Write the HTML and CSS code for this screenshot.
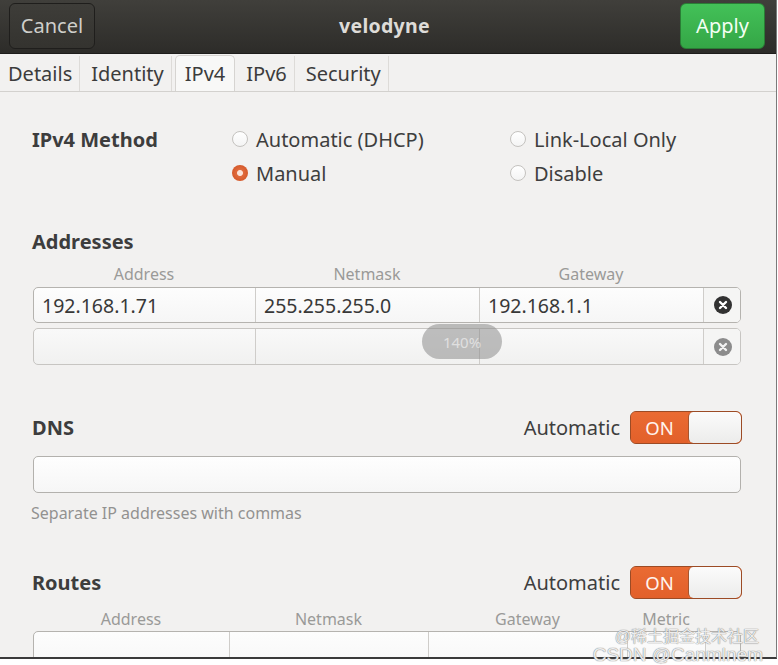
FILE: index.html
```html
<!DOCTYPE html>
<html>
<head>
<meta charset="utf-8">
<link rel="stylesheet" href="styles.css">
</head>
<body>
<div class="window">
  <header class="headerbar">
    <button class="btn btn-cancel">Cancel</button>
    <div class="title">velodyne</div>
    <button class="btn btn-apply">Apply</button>
  </header>
  <nav class="tabs">
    <div class="tab">Details</div>
    <div class="tab">Identity</div>
    <div class="tab active">IPv4</div>
    <div class="tab">IPv6</div>
    <div class="tab">Security</div>
  </nav>
  <main class="content">
    <section class="method">
      <div class="section-title method-label">IPv4 Method</div>
      <label class="radio"><span class="dot"></span>Automatic (DHCP)</label>
      <label class="radio"><span class="dot"></span>Link-Local Only</label>
      <label class="radio"><span class="dot checked"></span>Manual</label>
      <label class="radio"><span class="dot"></span>Disable</label>
    </section>

    <div class="section-title addresses-title">Addresses</div>
    <div class="col-labels addr-cols">
      <span>Address</span><span>Netmask</span><span>Gateway</span><span></span>
    </div>
    <div class="entry-row addr-cols">
      <div class="cell">192.168.1.71</div>
      <div class="cell">255.255.255.0</div>
      <div class="cell">192.168.1.1</div>
      <div class="cell del"><span class="xicon dark">
        <svg viewBox="0 0 18 18" width="18" height="18"><circle cx="9" cy="9" r="9" fill="#323232"/><path d="M6 6 L12 12 M12 6 L6 12" stroke="#fff" stroke-width="2.4" stroke-linecap="round"/></svg>
      </span></div>
    </div>
    <div class="entry-row addr-cols second">
      <div class="cell"></div>
      <div class="cell"></div>
      <div class="cell"></div>
      <div class="cell del"><span class="xicon">
        <svg viewBox="0 0 18 18" width="18" height="18"><circle cx="9" cy="9" r="9" fill="#8c8c8c"/><path d="M6 6 L12 12 M12 6 L6 12" stroke="#f2f2f2" stroke-width="2.4" stroke-linecap="round"/></svg>
      </span></div>
    </div>

    <div class="section-head dns-head">
      <div class="section-title">DNS</div>
      <div class="auto">
        <span class="auto-label">Automatic</span>
        <span class="switch"><span class="on">ON</span><span class="knob"></span></span>
      </div>
    </div>
    <div class="text-entry"></div>
    <div class="hint">Separate IP addresses with commas</div>

    <div class="section-head routes-head">
      <div class="section-title">Routes</div>
      <div class="auto">
        <span class="auto-label">Automatic</span>
        <span class="switch"><span class="on">ON</span><span class="knob"></span></span>
      </div>
    </div>
    <div class="col-labels route-cols">
      <span>Address</span><span>Netmask</span><span>Gateway</span><span>Metric</span><span></span>
    </div>
    <div class="entry-row route-cols">
      <div class="cell"></div>
      <div class="cell"></div>
      <div class="cell"></div>
      <div class="cell"></div>
      <div class="cell del"></div>
    </div>
  </main>
  <div class="zoom-osd">140%</div>
</div>
<div class="watermark">
  <div class="wm1">@稀土掘金技术社区</div>
  <div class="wm2">CSDN @Canmlnem</div>
</div>
</body>
</html>
```

FILE: styles.css
```css
* { box-sizing: border-box; }
html, body {
  margin: 0;
  padding: 0;
  background: #ffffff;
}
body {
  position: relative;
  width: 778px;
  height: 665px;
  overflow: hidden;
  font-family: "Noto Sans", "Open Sans", sans-serif;
  color: #3c3c3c;
}
.window {
  position: relative;
  width: 777px;
  height: 659px;
  background: #f2f1f0;
  border-right: 1px solid #7a7a7a;
  border-bottom: 2px solid #3a3a3a;
  overflow: hidden;
}

/* header bar */
.headerbar {
  height: 54px;
  display: flex;
  align-items: center;
  justify-content: space-between;
  padding: 0 11px 2px 9px;
  background: linear-gradient(#403f3b, #2d2c29);
  border-bottom: 1px solid #1e1d1b;
}
.btn {
  font-family: inherit;
  font-size: 20px;
  height: 46px;
  border-radius: 6px;
  padding: 0 10px;
}
.btn-cancel {
  width: 86px;
  color: #cfcfcb;
  background: linear-gradient(#3e3d39, #34332f);
  border: 1px solid #1f1e1c;
}
.btn-apply {
  width: 85px;
  color: #f3fff3;
  background: linear-gradient(#43c158, #34a646);
  border: 1px solid #2a7d35;
}
.title {
  color: #dedcd8;
  font-weight: bold;
  font-size: 19.5px;
  letter-spacing: 0.3px;
  margin-left: -6px;
}

/* tabs */
.tabs {
  height: 38px;
  display: flex;
  align-items: flex-end;
  padding-left: 0;
  border-bottom: 1px solid #d3d1ce;
  background: #f2f1f0;
}
.tab {
  height: 35px;
  display: flex;
  align-items: center;
  padding: 0 7px 1px 8px;
  font-size: 20px;
  color: #3c3c3c;
  border-right: 1px solid #dddbd8;
  margin-right: 3px;
}
.tab.active {
  background: #f8f8f7;
  border: 1px solid #d6d4d1;
  border-bottom: none;
  border-radius: 5px 5px 0 0;
  padding: 0 9px 1px 9px;
  height: 36px;
}

/* content */
.content {
  padding-left: 33px;
  width: 742px;
}
.section-title {
  font-weight: bold;
  font-size: 20px;
  color: #3d3d3d;
  margin-left: -1px;
}

.method {
  margin-top: 30px;
  display: grid;
  grid-template-columns: 199px 278px auto;
  grid-auto-rows: 34px;
  align-items: center;
}
.method-label { grid-row: 1; grid-column: 1; }
.method .radio:nth-of-type(1) { grid-row: 1; grid-column: 2; }
.method .radio:nth-of-type(2) { grid-row: 1; grid-column: 3; }
.method .radio:nth-of-type(3) { grid-row: 2; grid-column: 2; }
.method .radio:nth-of-type(4) { grid-row: 2; grid-column: 3; }
.radio {
  display: flex;
  align-items: center;
  font-size: 20px;
  color: #3e3e3e;
}
.dot {
  width: 16px;
  height: 16px;
  border-radius: 50%;
  border: 1px solid #c4c2bf;
  background: linear-gradient(#ffffff, #f4f4f4);
  margin-right: 8px;
  flex: none;
}
.dot.checked {
  border: none;
  background: radial-gradient(circle, #fbe3d8 0 2.5px, #e06a3c 3.5px, #d55a2b 8px);
}

.addresses-title {
  margin-top: 38px;
  line-height: 28px;
}
.col-labels {
  display: grid;
  font-size: 16px;
  color: #9a9a98;
  text-align: center;
  height: 20px;
  line-height: 20px;
}
.addr-cols { grid-template-columns: 222px 224px 224px 38px; width: 708px; }
.route-cols { grid-template-columns: 196px 199px 199px 78px 36px; width: 708px; }
.addresses-title + .col-labels { margin-top: 8px; }

.entry-row {
  display: grid;
  height: 36px;
  margin-top: 3px;
  border: 1px solid #b5b3af;
  border-radius: 5px;
  background: linear-gradient(#fdfdfd, #f6f6f6);
  overflow: hidden;
}
.entry-row.second {
  margin-top: 5px;
  height: 37px;
  background: linear-gradient(#f9f9f9, #f1f1f0);
  border-color: #c7c5c2;
}
.cell {
  border-right: 1px solid #cfcdca;
  display: flex;
  align-items: center;
  padding-left: 8px;
  font-size: 19.5px;
  color: #383838;
}
.cell:last-child { border-right: none; }
.cell.del {
  justify-content: center;
  padding-left: 0;
  background: #f5f5f4;
}
.xicon { display: flex; }

.section-head {
  display: flex;
  align-items: center;
  justify-content: space-between;
  height: 34px;
}
.dns-head { margin-top: 45px; width: 709px; }
.routes-head { margin-top: 41px; width: 709px; }
.auto {
  display: flex;
  align-items: center;
}
.auto-label {
  font-size: 20px;
  color: #3e3e3e;
  margin-right: 10px;
}
.switch {
  display: flex;
  width: 112px;
  height: 33px;
  border: 1px solid #9c4b25;
  border-radius: 6px;
  overflow: hidden;
  background: #e8672f;
}
.switch .on {
  width: 57px;
  display: flex;
  align-items: center;
  justify-content: center;
  color: #fff4ee;
  font-size: 18.5px;
  background: linear-gradient(#ea6b33, #e2602a);
}
.switch .knob {
  flex: 1;
  background: linear-gradient(#fbfbfb, #ececeb);
  border-left: 1px solid #a5552f;
  border-radius: 5px;
}

.text-entry {
  margin-top: 12px;
  width: 708px;
  height: 37px;
  border: 1px solid #b3b1ad;
  border-radius: 5px;
  background: linear-gradient(#fefefe, #f6f6f6);
}
.hint {
  margin-top: 9px;
  margin-left: -2px;
  font-size: 16px;
  line-height: 22px;
  color: #929290;
}
.routes-head + .col-labels { margin-top: 10px; }
.route-cols.entry-row { margin-top: 2px; height: 40px; }

/* overlays */
.zoom-osd {
  position: absolute;
  left: 422px;
  top: 324px;
  width: 80px;
  height: 35px;
  border-radius: 18px;
  background: rgba(140, 140, 140, 0.55);
  color: rgba(255, 255, 255, 0.55);
  font-size: 15px;
  display: flex;
  align-items: center;
  justify-content: center;
}
.watermark {
  position: absolute;
  right: 15px;
  top: 628px;
  text-align: right;
  color: rgba(255, 255, 255, 0.85);
  text-shadow: 0 0 1px #888, 0 0 1px #888;
  font-family: "Liberation Sans", "Noto Sans CJK SC", sans-serif;
  line-height: 18px;
}
.wm1 { font-size: 16px; margin-right: 4px; }
.wm2 { font-size: 19px; line-height: 17px; }
```
